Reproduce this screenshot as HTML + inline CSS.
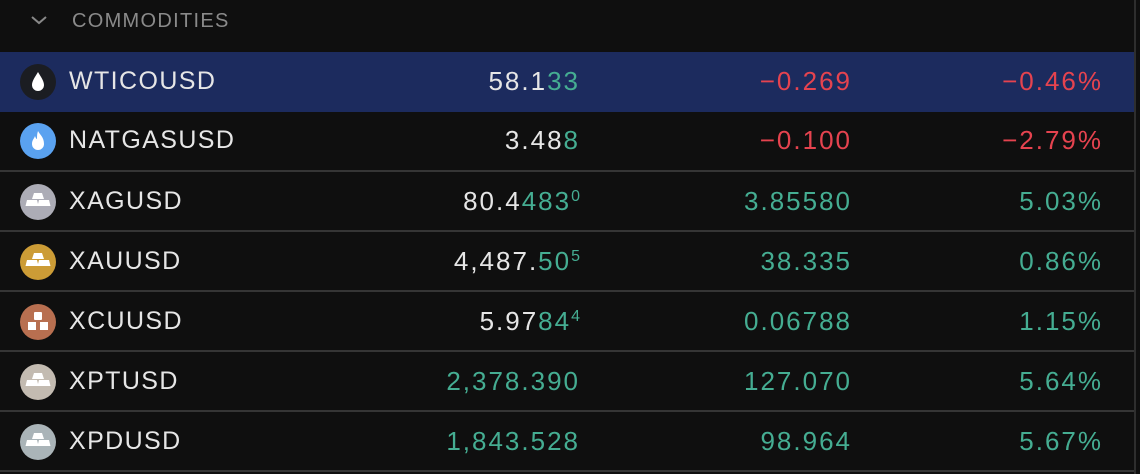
<!DOCTYPE html>
<html><head><style>
body{margin:0;background:#0f0f0f;width:1140px;height:474px;overflow:hidden;font-family:"Liberation Sans",sans-serif;position:relative}
.vl{position:absolute;left:1134px;top:0;width:2px;height:474px;background:#2e2e2e}
.hdr{position:absolute;left:72px;top:10px;font-size:20px;color:#8a8a8a;letter-spacing:1.3px}
.chev{position:absolute;left:30px;top:14px}
.row{position:absolute;left:0;width:1134px;height:60px}
.row.sel{background:#1c2b5e}
.sep{position:absolute;left:0;width:1134px;height:2px;background:#353535}
.ic{position:absolute;left:20px;top:12px;width:36px;height:36px;border-radius:50%}
.ic svg{position:absolute;left:0;top:0}
.nm{position:absolute;left:69px;top:15px;font-size:25px;color:#e6e6e6;letter-spacing:1.4px}
.c{position:absolute;top:14px;font-size:26px;text-align:right;white-space:nowrap;letter-spacing:2px}
.p{right:554px}.d{right:282px}.q{right:31px}
.w{color:#e6e6e6}.g{color:#45ad92}.r{color:#e5434f}
sup{font-size:16px;vertical-align:0;position:relative;top:-9px;letter-spacing:0}
</style></head><body>
<div class="vl"></div>
<svg class="chev" width="18" height="12" viewBox="0 0 18 12"><path d="M2 3 L9 9 L16 3" stroke="#888" stroke-width="2" fill="none"/></svg>
<div class="hdr">COMMODITIES</div>

<div class="row sel" style="top:52px"><div class="ic" style="background:#1b1d22"><svg width="36" height="36"><path d="M18 8 C21 13 24 17 24 21 A6 6 0 0 1 12 21 C12 17 15 13 18 8Z" fill="#fff"/></svg></div><div class="nm">WTICOUSD</div><div class="c p w">58.1<span class="g">33</span></div><div class="c d r">−0.269</div><div class="c q r">−0.46%</div></div>

<div class="row" style="top:111px"><div class="ic" style="background:#5aa2f0"><svg width="36" height="36"><path d="M18 8 C20 12 24 14 24 21 A6 6 0 0 1 12 21 C12 17 14 16 15 13 C16 16 17 16 17 16 C17 13 17 11 18 8Z" fill="#fff"/></svg></div><div class="nm">NATGASUSD</div><div class="c p w">3.48<span class="g">8</span></div><div class="c d r">−0.100</div><div class="c q r">−2.79%</div></div>
<div class="sep" style="top:170px"></div>

<div class="row" style="top:172px"><div class="ic" style="background:#acacb6"><svg width="36" height="36"><path d="M14 9h8l2 6h-12z M7 16h10l1.5 6h-13z M19 16h10l1.5 6h-13z" fill="#fff"/></svg></div><div class="nm">XAGUSD</div><div class="c p w">80.4<span class="g">483<sup>0</sup></span></div><div class="c d g">3.85580</div><div class="c q g">5.03%</div></div>
<div class="sep" style="top:230px"></div>

<div class="row" style="top:232px"><div class="ic" style="background:#cc9c36"><svg width="36" height="36"><path d="M14 9h8l2 6h-12z M7 16h10l1.5 6h-13z M19 16h10l1.5 6h-13z" fill="#fff"/></svg></div><div class="nm">XAUUSD</div><div class="c p w">4,487.<span class="g">50<sup>5</sup></span></div><div class="c d g">38.335</div><div class="c q g">0.86%</div></div>
<div class="sep" style="top:290px"></div>

<div class="row" style="top:292px"><div class="ic" style="background:#b86f50"><svg width="36" height="36"><rect x="14" y="8" width="8" height="8" rx="1" fill="#fff"/><rect x="8" y="18" width="8" height="8" fill="#fff"/><rect x="20" y="18" width="8" height="8" fill="#fff"/></svg></div><div class="nm">XCUUSD</div><div class="c p w">5.97<span class="g">84<sup>4</sup></span></div><div class="c d g">0.06788</div><div class="c q g">1.15%</div></div>
<div class="sep" style="top:350px"></div>

<div class="row" style="top:352px"><div class="ic" style="background:#c3bbb1"><svg width="36" height="36"><path d="M14 9h8l2 6h-12z M7 16h10l1.5 6h-13z M19 16h10l1.5 6h-13z" fill="#fff"/></svg></div><div class="nm">XPTUSD</div><div class="c p g">2,378.390</div><div class="c d g">127.070</div><div class="c q g">5.64%</div></div>
<div class="sep" style="top:410px"></div>

<div class="row" style="top:412px"><div class="ic" style="background:#aab4b8"><svg width="36" height="36"><path d="M14 9h8l2 6h-12z M7 16h10l1.5 6h-13z M19 16h10l1.5 6h-13z" fill="#fff"/></svg></div><div class="nm">XPDUSD</div><div class="c p g">1,843.528</div><div class="c d g">98.964</div><div class="c q g">5.67%</div></div>
<div class="sep" style="top:470px"></div>
</body></html>
